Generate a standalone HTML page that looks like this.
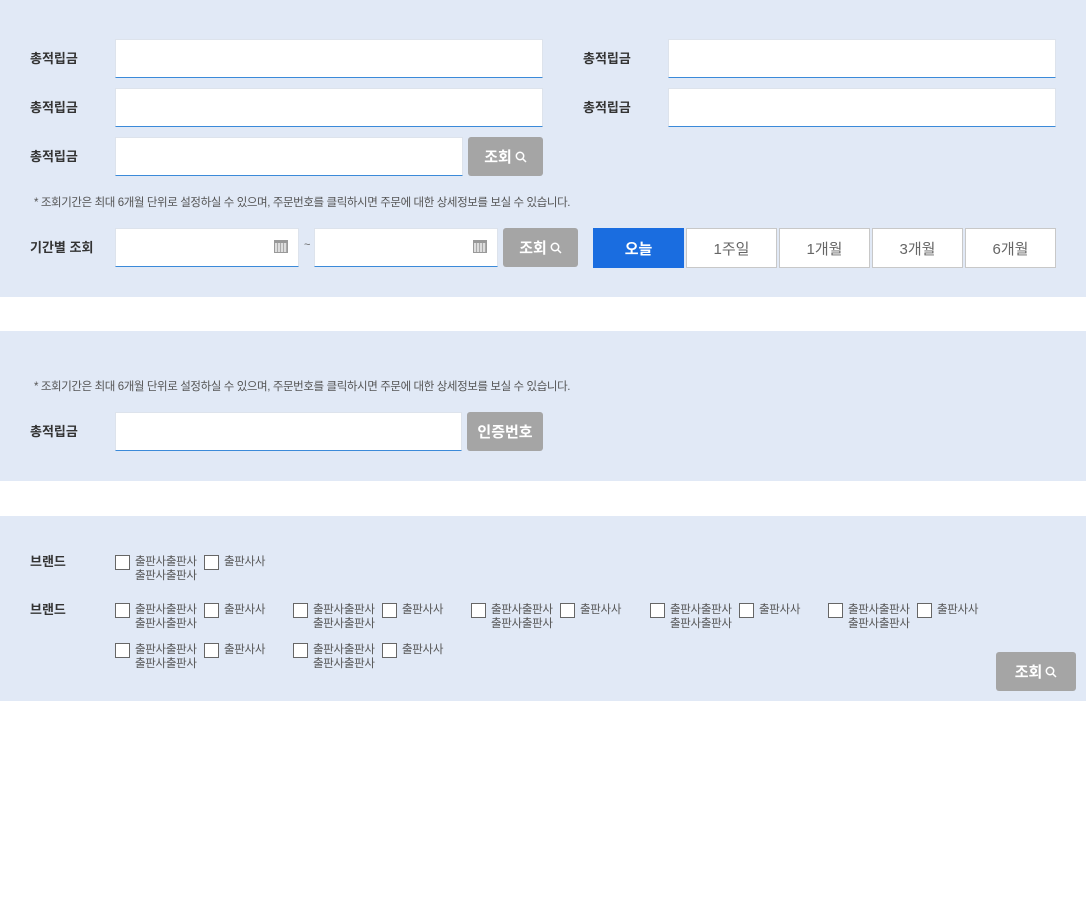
<!DOCTYPE html>
<html><head><meta charset="utf-8"><style>
*{margin:0;padding:0;box-sizing:border-box}
body{width:1086px;height:912px;background:#fff;position:relative;font-family:"Liberation Sans","Noto Sans CJK KR",sans-serif;color:#333;overflow:hidden}
.sec{position:absolute;left:0;width:1086px;background:#e1e9f6}
.a{position:absolute}
.lbl{font-size:13px;font-weight:bold;color:#333;line-height:16px}
.inp{position:absolute;height:39px;background:#fff;border:1px solid #dde3ec;border-bottom:1px solid #3b8ad9}
.btn{position:absolute;height:39px;background:#a5a5a5;border-radius:3px;color:#fff;font-size:15px;font-weight:bold;display:flex;align-items:center;justify-content:center;gap:3px}
.note{font-size:11.5px;color:#555;letter-spacing:-0.4px}
.tab{position:absolute;top:228px;height:40px;width:91px;background:#fff;border:1px solid #c8c8c8;font-size:15px;color:#666;display:flex;align-items:center;justify-content:center}
.cb{position:absolute;width:15px;height:15px;background:#fff;border:1px solid #666}
.ct{position:absolute;font-size:11.5px;color:#555;line-height:14px;letter-spacing:-0.3px}
.cal{position:absolute;width:14px;height:13px;border:1px solid #999;background:repeating-linear-gradient(90deg,#ddd 0 2px,#aaa 2px 3px);border-top:3px solid #999}
</style></head><body>
<div class="sec" style="top:0;height:297px"></div>
<div class="sec" style="top:331px;height:150px"></div>
<div class="sec" style="top:516px;height:185px"></div>

<div class="a lbl" style="left:30px;top:51px">총적립금</div>
<div class="inp" style="left:115px;top:39px;width:428px"></div>
<div class="a lbl" style="left:583px;top:51px">총적립금</div>
<div class="inp" style="left:668px;top:39px;width:388px"></div>
<div class="a lbl" style="left:30px;top:100px">총적립금</div>
<div class="inp" style="left:115px;top:88px;width:428px"></div>
<div class="a lbl" style="left:583px;top:100px">총적립금</div>
<div class="inp" style="left:668px;top:88px;width:388px"></div>
<div class="a lbl" style="left:30px;top:149px">총적립금</div>
<div class="inp" style="left:115px;top:137px;width:348px"></div>
<div class="btn" style="left:468px;top:137px;width:75px">조회<svg width="12" height="12" viewBox="0 0 12 12"><circle cx="5" cy="5" r="3.7" fill="none" stroke="#fff" stroke-width="1.5"/><path d="M7.8 7.8L11 11" stroke="#fff" stroke-width="1.5"/></svg></div>
<div class="a note" style="left:34px;top:194px">* 조회기간은 최대 6개월 단위로 설정하실 수 있으며, 주문번호를 클릭하시면 주문에 대한 상세정보를 보실 수 있습니다.</div>
<div class="a lbl" style="left:30px;top:240px">기간별 조회</div>
<div class="inp" style="left:115px;top:228px;width:184px"></div>
<div class="cal" style="left:274px;top:240px"></div>
<div class="a" style="left:304px;top:239px;font-size:11px;color:#666">~</div>
<div class="inp" style="left:314px;top:228px;width:184px"></div>
<div class="cal" style="left:473px;top:240px"></div>
<div class="btn" style="left:503px;top:228px;width:75px">조회<svg width="12" height="12" viewBox="0 0 12 12"><circle cx="5" cy="5" r="3.7" fill="none" stroke="#fff" stroke-width="1.5"/><path d="M7.8 7.8L11 11" stroke="#fff" stroke-width="1.5"/></svg></div>
<div class="tab" style="left:593px;background:#1a6de0;border-color:#1a6de0;color:#fff;font-weight:bold">오늘</div>
<div class="tab" style="left:686px">1주일</div>
<div class="tab" style="left:779px">1개월</div>
<div class="tab" style="left:872px">3개월</div>
<div class="tab" style="left:965px">6개월</div>

<div class="a note" style="left:34px;top:378px">* 조회기간은 최대 6개월 단위로 설정하실 수 있으며, 주문번호를 클릭하시면 주문에 대한 상세정보를 보실 수 있습니다.</div>
<div class="a lbl" style="left:30px;top:424px">총적립금</div>
<div class="inp" style="left:115px;top:412px;width:347px"></div>
<div class="btn" style="left:467px;top:412px;width:76px">인증번호</div>

<div class="a lbl" style="left:30px;top:554px">브랜드</div>
<div class="a lbl" style="left:30px;top:602px">브랜드</div>
<div id="cbs"></div>
<div class="btn" style="left:996px;top:652px;width:80px">조회<svg width="12" height="12" viewBox="0 0 12 12"><circle cx="5" cy="5" r="3.7" fill="none" stroke="#fff" stroke-width="1.5"/><path d="M7.8 7.8L11 11" stroke="#fff" stroke-width="1.5"/></svg></div>

<!-- row 1 -->
<div class="cb" style="left:115px;top:555px"></div><div class="ct" style="left:135px;top:555px">출판사출판사<br>출판사출판사</div>
<div class="cb" style="left:204px;top:555px"></div><div class="ct" style="left:224px;top:555px">출판사사</div>
<!-- row 2 -->
<div class="cb" style="left:115px;top:603px"></div><div class="ct" style="left:135px;top:603px">출판사출판사<br>출판사출판사</div>
<div class="cb" style="left:204px;top:603px"></div><div class="ct" style="left:224px;top:603px">출판사사</div>
<div class="cb" style="left:293px;top:603px"></div><div class="ct" style="left:313px;top:603px">출판사출판사<br>출판사출판사</div>
<div class="cb" style="left:382px;top:603px"></div><div class="ct" style="left:402px;top:603px">출판사사</div>
<div class="cb" style="left:471px;top:603px"></div><div class="ct" style="left:491px;top:603px">출판사출판사<br>출판사출판사</div>
<div class="cb" style="left:560px;top:603px"></div><div class="ct" style="left:580px;top:603px">출판사사</div>
<div class="cb" style="left:650px;top:603px"></div><div class="ct" style="left:670px;top:603px">출판사출판사<br>출판사출판사</div>
<div class="cb" style="left:739px;top:603px"></div><div class="ct" style="left:759px;top:603px">출판사사</div>
<div class="cb" style="left:828px;top:603px"></div><div class="ct" style="left:848px;top:603px">출판사출판사<br>출판사출판사</div>
<div class="cb" style="left:917px;top:603px"></div><div class="ct" style="left:937px;top:603px">출판사사</div>
<!-- row 3 -->
<div class="cb" style="left:115px;top:643px"></div><div class="ct" style="left:135px;top:643px">출판사출판사<br>출판사출판사</div>
<div class="cb" style="left:204px;top:643px"></div><div class="ct" style="left:224px;top:643px">출판사사</div>
<div class="cb" style="left:293px;top:643px"></div><div class="ct" style="left:313px;top:643px">출판사출판사<br>출판사출판사</div>
<div class="cb" style="left:382px;top:643px"></div><div class="ct" style="left:402px;top:643px">출판사사</div>
</body></html>
